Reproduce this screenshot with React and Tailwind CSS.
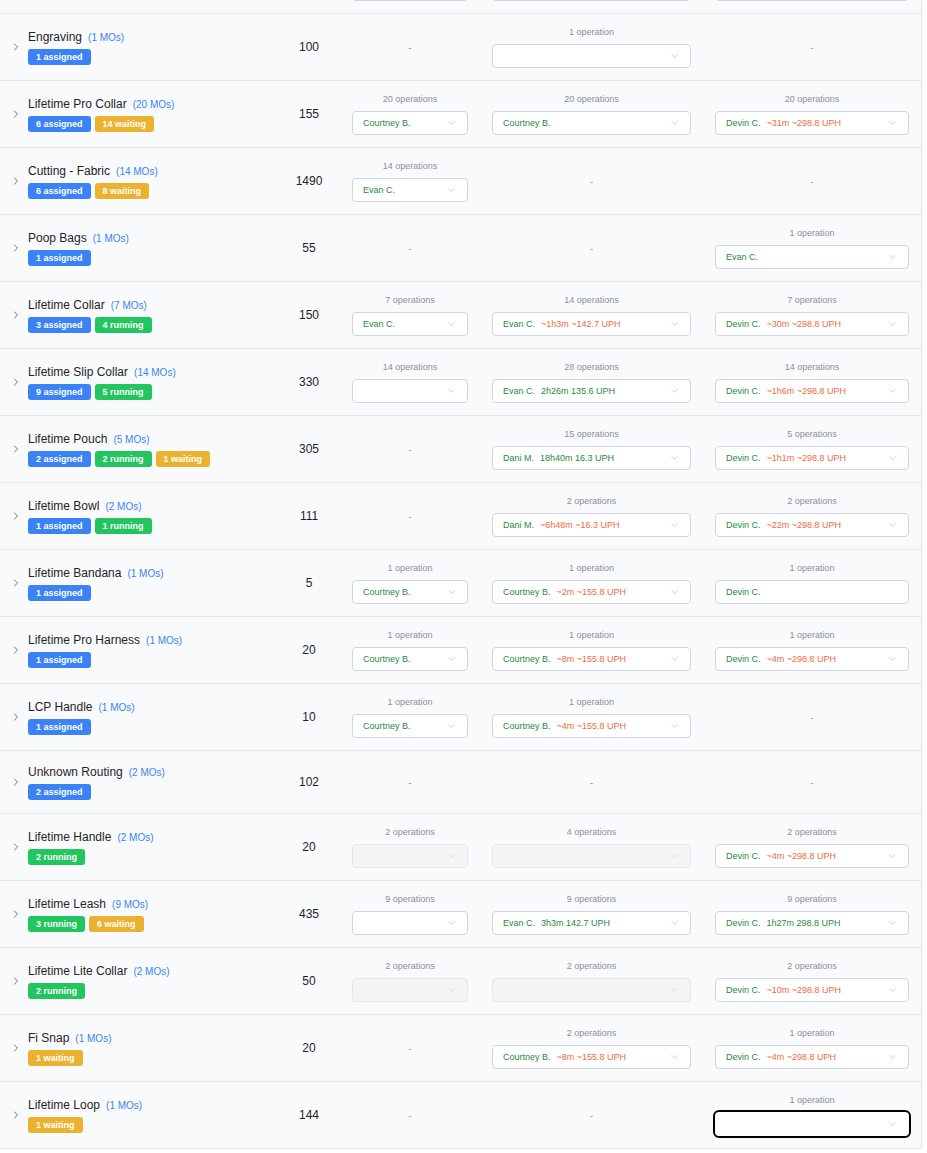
import { ChevronRight, ChevronDown } from 'lucide-react'

const BADGE = {
  assigned: 'bg-[#3b82f6]',
  running: 'bg-[#22c55e]',
  waiting: 'bg-[#ebb22f]',
}

const ROWS = [
  {
    // row scrolled above the top edge, only its select bottoms show
    ghost: true, name: '', mos: 0, badges: [], qty: '',
    cols: [{ n: '' }, { n: '' }, { n: '' }],
  },
  {
    name: 'Engraving', mos: 1, badges: [['1', 'assigned']], qty: 100,
    cols: [null, { n: '1 operation' }, null],
  },
  {
    name: 'Lifetime Pro Collar', mos: 20, badges: [['6', 'assigned'], ['14', 'waiting']], qty: 155,
    cols: [
      { n: '20 operations', who: 'Courtney B.' },
      { n: '20 operations', who: 'Courtney B.' },
      { n: '20 operations', who: 'Devin C.', est: '~31m ~298.8 UPH' },
    ],
  },
  {
    name: 'Cutting - Fabric', mos: 14, badges: [['6', 'assigned'], ['8', 'waiting']], qty: 1490,
    cols: [{ n: '14 operations', who: 'Evan C.' }, null, null],
  },
  {
    name: 'Poop Bags', mos: 1, badges: [['1', 'assigned']], qty: 55,
    cols: [null, null, { n: '1 operation', who: 'Evan C.' }],
  },
  {
    name: 'Lifetime Collar', mos: 7, badges: [['3', 'assigned'], ['4', 'running']], qty: 150,
    cols: [
      { n: '7 operations', who: 'Evan C.' },
      { n: '14 operations', who: 'Evan C.', est: '~1h3m ~142.7 UPH' },
      { n: '7 operations', who: 'Devin C.', est: '~30m ~298.8 UPH' },
    ],
  },
  {
    name: 'Lifetime Slip Collar', mos: 14, badges: [['9', 'assigned'], ['5', 'running']], qty: 330,
    cols: [
      { n: '14 operations' },
      { n: '28 operations', who: 'Evan C.', est: '2h26m 135.6 UPH' },
      { n: '14 operations', who: 'Devin C.', est: '~1h6m ~298.8 UPH' },
    ],
  },
  {
    name: 'Lifetime Pouch', mos: 5, badges: [['2', 'assigned'], ['2', 'running'], ['1', 'waiting']], qty: 305,
    cols: [
      null,
      { n: '15 operations', who: 'Dani M.', est: '18h40m 16.3 UPH' },
      { n: '5 operations', who: 'Devin C.', est: '~1h1m ~298.8 UPH' },
    ],
  },
  {
    name: 'Lifetime Bowl', mos: 2, badges: [['1', 'assigned'], ['1', 'running']], qty: 111,
    cols: [
      null,
      { n: '2 operations', who: 'Dani M.', est: '~6h48m ~16.3 UPH' },
      { n: '2 operations', who: 'Devin C.', est: '~22m ~298.8 UPH' },
    ],
  },
  {
    name: 'Lifetime Bandana', mos: 1, badges: [['1', 'assigned']], qty: 5,
    cols: [
      { n: '1 operation', who: 'Courtney B.' },
      { n: '1 operation', who: 'Courtney B.', est: '~2m ~155.8 UPH' },
      { n: '1 operation', who: 'Devin C.', noIcon: true },
    ],
  },
  {
    name: 'Lifetime Pro Harness', mos: 1, badges: [['1', 'assigned']], qty: 20,
    cols: [
      { n: '1 operation', who: 'Courtney B.' },
      { n: '1 operation', who: 'Courtney B.', est: '~8m ~155.8 UPH' },
      { n: '1 operation', who: 'Devin C.', est: '~4m ~298.8 UPH' },
    ],
  },
  {
    name: 'LCP Handle', mos: 1, badges: [['1', 'assigned']], qty: 10,
    cols: [
      { n: '1 operation', who: 'Courtney B.' },
      { n: '1 operation', who: 'Courtney B.', est: '~4m ~155.8 UPH' },
      null,
    ],
  },
  {
    name: 'Unknown Routing', mos: 2, badges: [['2', 'assigned']], qty: 102,
    cols: [null, null, null],
  },
  {
    name: 'Lifetime Handle', mos: 2, badges: [['2', 'running']], qty: 20,
    cols: [
      { n: '2 operations', disabled: true },
      { n: '4 operations', disabled: true },
      { n: '2 operations', who: 'Devin C.', est: '~4m ~298.8 UPH' },
    ],
  },
  {
    name: 'Lifetime Leash', mos: 9, badges: [['3', 'running'], ['6', 'waiting']], qty: 435,
    cols: [
      { n: '9 operations' },
      { n: '9 operations', who: 'Evan C.', est: '3h3m 142.7 UPH' },
      { n: '9 operations', who: 'Devin C.', est: '1h27m 298.8 UPH' },
    ],
  },
  {
    name: 'Lifetime Lite Collar', mos: 2, badges: [['2', 'running']], qty: 50,
    cols: [
      { n: '2 operations', disabled: true },
      { n: '2 operations', disabled: true },
      { n: '2 operations', who: 'Devin C.', est: '~10m ~298.8 UPH' },
    ],
  },
  {
    name: 'Fi Snap', mos: 1, badges: [['1', 'waiting']], qty: 20,
    cols: [
      null,
      { n: '2 operations', who: 'Courtney B.', est: '~8m ~155.8 UPH' },
      { n: '1 operation', who: 'Devin C.', est: '~4m ~298.8 UPH' },
    ],
  },
  {
    name: 'Lifetime Loop', mos: 1, badges: [['1', 'waiting']], qty: 144,
    cols: [null, null, { n: '1 operation', focused: true }],
  },
]

function Picker({ c }) {
  let box = 'bg-white border-[#d1d5db]'
  if (c.disabled) box = 'bg-[#f3f4f6] border-[#e5e7eb]'
  if (c.focused) box = 'bg-white border-white outline-2 outline-black'
  return (
    <div className={`relative h-6 w-full rounded-[4px] border flex items-center pl-2.5 pr-6 text-[9px] leading-none whitespace-nowrap ${box}`}>
      {c.who && <span className="text-[#1f8a3e]">{c.who}</span>}
      {c.est && (
        <span className={`ml-[6px] ${c.est.startsWith('~') ? 'text-[#f26a3d]' : 'text-[#1f8a3e]'}`}>
          {c.est}
        </span>
      )}
      {!c.noIcon && (
        <ChevronDown
          size={11}
          strokeWidth={1.5}
          className={`absolute right-[10px] top-1/2 -translate-y-1/2 ${c.disabled ? 'text-[#d4d7dc]' : 'text-[#b6bac1]'}`}
        />
      )}
    </div>
  )
}

function OpCell({ c }) {
  if (!c) {
    return <div className="flex items-center justify-center text-[10px] text-[#9ca3af]">-</div>
  }
  return (
    <div className="px-3 py-3 flex flex-col items-center">
      <div className="h-[14px] text-[9px] leading-[12px] text-[#8b9099]">{c.n}</div>
      <div className="mt-1 w-full">
        <Picker c={c} />
      </div>
    </div>
  )
}

function Row({ r, last }) {
  return (
    <div className={`grid grid-cols-[278px_62px_140px_223px_218px] items-center ${last ? '' : 'border-b border-[#e5e7eb]'}`}>
      {r.ghost ? (
        <div />
      ) : (
        <div className="flex items-center py-[13px]">
          <ChevronRight size={12} strokeWidth={2} className="ml-[10px] text-[#6b7280] flex-shrink-0" />
          <div className="ml-[6px]">
            <div className="h-[18px] flex items-baseline gap-[6px] leading-[17px]">
              <span className="text-[12px] text-[#1f2328]">{r.name}</span>
              <span className="text-[10px] text-[#3b82f6]">({r.mos} MOs)</span>
            </div>
            <div className="mt-[2px] flex gap-1">
              {r.badges.map(([n, kind], i) => (
                <span
                  key={i}
                  className={`h-4 px-2 rounded-[3px] text-[9px] leading-4 font-bold text-white ${BADGE[kind]}`}
                >
                  {n} {kind}
                </span>
              ))}
            </div>
          </div>
        </div>
      )}
      <div className="text-center text-[12px] text-[#1f2328]">{r.qty}</div>
      {r.cols.map((c, i) => (
        <OpCell key={i} c={c} />
      ))}
    </div>
  )
}

export default function App() {
  return (
    <div className="min-h-screen bg-white font-['Liberation_Sans',Arial,sans-serif]">
      <div className="w-[922px] -mt-[53px] bg-[#f9fafb] border-r border-b border-[#e3e5e9] rounded-br-[4px] shadow-[0_1px_2px_rgba(0,0,0,0.08)]">
        {ROWS.map((r, i) => (
          <Row key={i} r={r} last={i === ROWS.length - 1} />
        ))}
      </div>
    </div>
  )
}
